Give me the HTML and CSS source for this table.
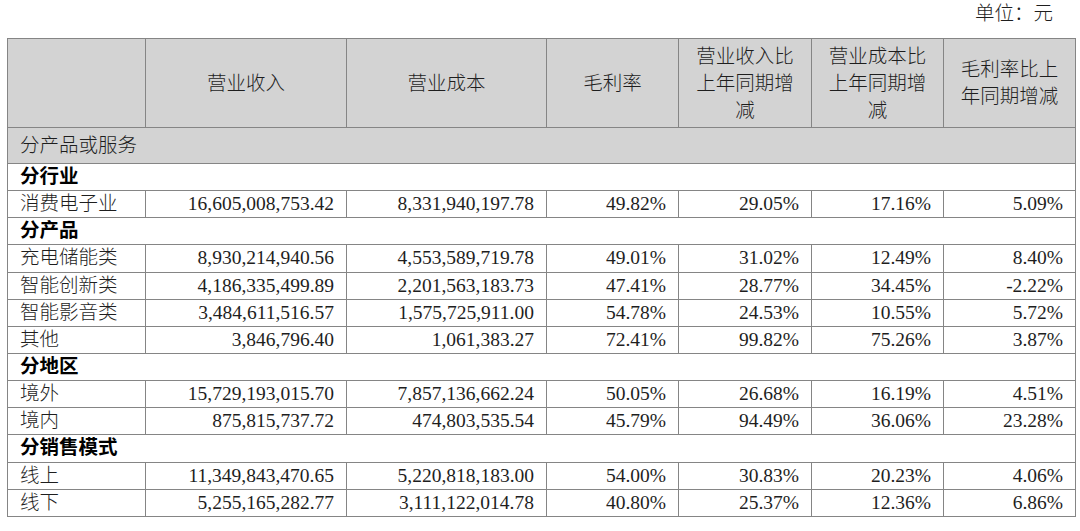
FILE: index.html
```html
<!DOCTYPE html>
<html lang="zh-CN">
<head>
<meta charset="utf-8">
<title>主营业务分行业、分产品、分地区、分销售模式情况</title>
<link rel="stylesheet" href="styles.css">
</head>
<body>
<div class="page">
  <div class="unit">单位：元</div>
  <table class="fin">
    <colgroup>
      <col class="c-name"><col class="c-rev"><col class="c-cost"><col class="c-pct"><col class="c-pct2"><col class="c-pct"><col class="c-pct">
    </colgroup>
    <thead>
      <tr class="head">
        <th></th>
        <th>营业收入</th>
        <th>营业成本</th>
        <th>毛利率</th>
        <th>营业收入比上年同期增减</th>
        <th>营业成本比上年同期增减</th>
        <th>毛利率比上年同期增减</th>
      </tr>
    </thead>
    <tbody>
      <tr class="section"><td colspan="7">分产品或服务</td></tr>
      <tr class="group"><td colspan="7">分行业</td></tr>
      <tr><td>消费电子业</td><td>16,605,008,753.42</td><td>8,331,940,197.78</td><td>49.82%</td><td>29.05%</td><td>17.16%</td><td>5.09%</td></tr>
      <tr class="group"><td colspan="7">分产品</td></tr>
      <tr><td>充电储能类</td><td>8,930,214,940.56</td><td>4,553,589,719.78</td><td>49.01%</td><td>31.02%</td><td>12.49%</td><td>8.40%</td></tr>
      <tr><td>智能创新类</td><td>4,186,335,499.89</td><td>2,201,563,183.73</td><td>47.41%</td><td>28.77%</td><td>34.45%</td><td>-2.22%</td></tr>
      <tr><td>智能影音类</td><td>3,484,611,516.57</td><td>1,575,725,911.00</td><td>54.78%</td><td>24.53%</td><td>10.55%</td><td>5.72%</td></tr>
      <tr><td>其他</td><td>3,846,796.40</td><td>1,061,383.27</td><td>72.41%</td><td>99.82%</td><td>75.26%</td><td>3.87%</td></tr>
      <tr class="group"><td colspan="7">分地区</td></tr>
      <tr><td>境外</td><td>15,729,193,015.70</td><td>7,857,136,662.24</td><td>50.05%</td><td>26.68%</td><td>16.19%</td><td>4.51%</td></tr>
      <tr><td>境内</td><td>875,815,737.72</td><td>474,803,535.54</td><td>45.79%</td><td>94.49%</td><td>36.06%</td><td>23.28%</td></tr>
      <tr class="group"><td colspan="7">分销售模式</td></tr>
      <tr><td>线上</td><td>11,349,843,470.65</td><td>5,220,818,183.00</td><td>54.00%</td><td>30.83%</td><td>20.23%</td><td>4.06%</td></tr>
      <tr><td>线下</td><td>5,255,165,282.77</td><td>3,111,122,014.78</td><td>40.80%</td><td>25.37%</td><td>12.36%</td><td>6.86%</td></tr>
    </tbody>
  </table>
</div>
</body>
</html>
```

FILE: styles.css
```css
html, body {
  margin: 0;
  padding: 0;
  background: #ffffff;
}

body {
  font-family: "Liberation Serif", "Noto Sans CJK SC", serif;
  font-size: 19.5px;
  font-weight: 300;
  color: #1e1e1e;
}

.page {
  width: 1080px;
  height: 531px;
  padding: 0 0 0 7px;
  box-sizing: border-box;
}

.unit {
  height: 38px;
  line-height: 28px;
  text-align: right;
  padding-right: 27px;
  box-sizing: border-box;
}

.fin {
  border-collapse: collapse;
  table-layout: fixed;
  width: 1068px;
}

.c-name { width: 138px; }
.c-rev { width: 201px; }
.c-cost { width: 200px; }
.c-pct { width: 132px; }
.c-pct2 { width: 133px; }

.fin th,
.fin td {
  border: 1px solid #858585;
  padding: 0 12px;
  line-height: 26px;
  vertical-align: middle;
  overflow: hidden;
  white-space: nowrap;
}

.fin th {
  background: #d3d3d3;
  font-weight: 300;
  text-align: center;
  white-space: normal;
  line-height: 27px;
  height: 89px;
  box-sizing: border-box;
}

.fin td {
  height: 27.15px;
  box-sizing: border-box;
  text-align: right;
}

.fin td:first-child {
  text-align: left;
  padding-left: 12px;
}

.section td {
  background: #d3d3d3;
  height: 36px;
  text-align: left;
}

.group td {
  font-weight: bold;
  color: #000;
  text-align: left;
}
```
